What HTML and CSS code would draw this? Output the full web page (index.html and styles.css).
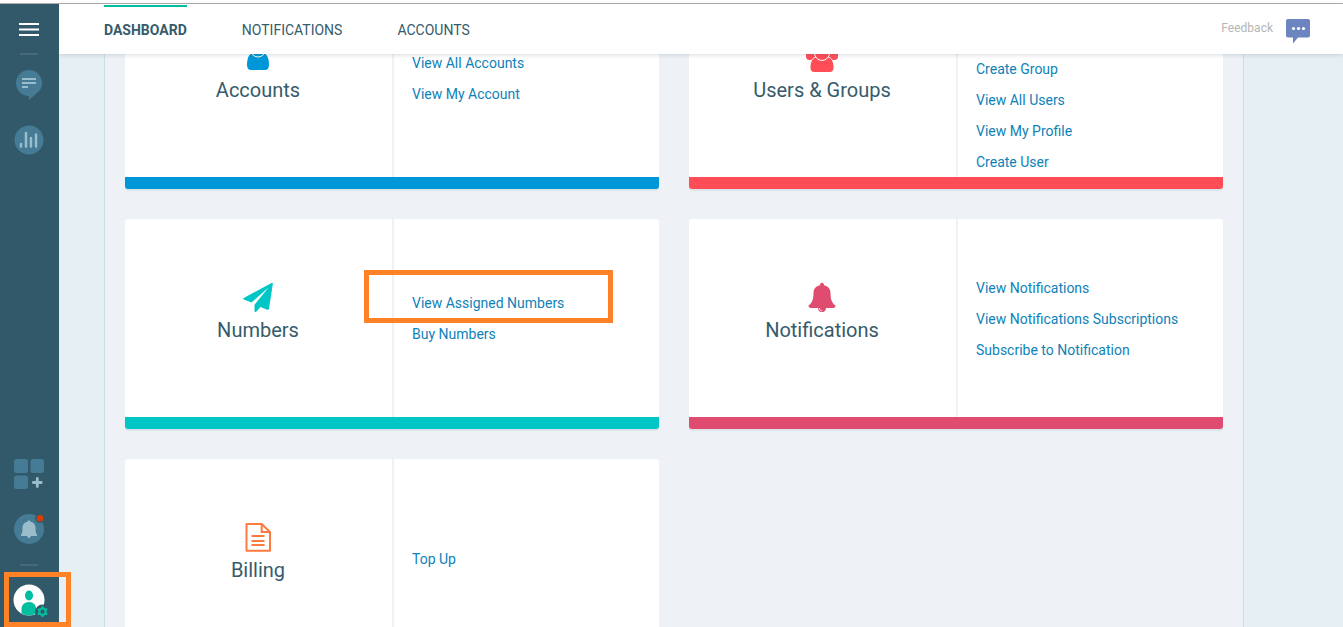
FILE: index.html
```html
<!DOCTYPE html>
<html lang="en">
<head>
<meta charset="utf-8">
<title>Dashboard</title>
<link rel="stylesheet" href="styles.css">
</head>
<body>
<div class="app">
  <aside class="sidebar">
    <button class="menu-button" type="button" aria-label="Menu">
      <svg width="20" height="13" viewBox="0 0 20 13"><path d="M0 1h20M0 6.500h20M0 12h20" stroke="#fff" stroke-width="2"/></svg>
    </button>
    <hr class="rule rule-top">
    <a class="side-item" href="#" aria-label="Messages">
      <svg width="30" height="32" viewBox="0 -2 30 32">
        <path fill="#457b94" d="M15 0a13 13 0 0 1 9.500 21.800L15 30V26A13 13 0 0 1 15 0z"/>
        <path d="M8 9h14M8 13h14M8 17h6" stroke="#9bbccb" stroke-width="2"/>
      </svg>
    </a>
    <a class="side-item" href="#" aria-label="Reports">
      <svg width="30" height="30" viewBox="0 0 30 30">
        <circle cx="15" cy="15" r="14.500" fill="#457b94"/>
        <path d="M7 19v2.500M12 8v13.500M17 13v8.500M22 9.500v12" stroke="#9bbccb" stroke-width="2.500" stroke-linecap="round"/>
      </svg>
    </a>
    <div class="spacer"></div>
    <a class="side-item" href="#" aria-label="Add widgets">
      <svg width="30" height="32" viewBox="0 -2 30 32">
        <g fill="#457b94"><rect width="14" height="14" rx="2.500"/><rect x="16.500" width="13.500" height="14" rx="2.500"/><rect y="16.500" width="14" height="13.500" rx="2.500"/></g>
        <path d="M23.300 19.500v8M19.300 23.500h8" stroke="#9bbccb" stroke-width="2.800" stroke-linecap="round"/>
      </svg>
    </a>
    <a class="side-item" href="#" aria-label="Alerts">
      <svg width="30" height="30" viewBox="0 0 30 30">
        <circle cx="15" cy="15" r="15" fill="#457b94"/>
        <path fill="#9bbccb" d="M14 6.500h2l.5 1.300c3.500.6 5 3.200 5 6.200 0 4 .5 5.500 1.500 6.500v1.500h-6l-1.500 2.300h-1L13 22H7v-1.500c1-1 1.500-2.500 1.500-6.500 0-3 1.500-5.600 5-6.200z"/>
        <circle cx="26" cy="4.300" r="4.800" fill="#32596a"/><circle cx="26" cy="4.300" r="3.200" fill="#dc3c00"/>
      </svg>
    </a>
    <hr class="rule rule-bottom">
    <a class="side-item profile" href="#" aria-label="Profile settings">
      <svg width="36" height="34" viewBox="0 0 36 34">
        <circle cx="16" cy="17" r="15.500" fill="#fff"/>
        <ellipse cx="16" cy="12.500" rx="4" ry="5" fill="#00bfa0"/>
        <path fill="#00bfa0" d="M8.500 30.500V26c0-4 3-7 7.500-7s7 3 7 7v4.500q-3.500 2-7 2t-7.500-2z"/>
        <circle cx="29.500" cy="29" r="7.500" fill="#32596a"/>
        <g transform="translate(29.500 28.700)" fill="none" stroke="#00bfa0" stroke-width="2.200"><circle r="3.200"/><path d="M0-5.400V-3.500M0 3.500V5.400M-4.700-2.700l1.600.9M3.100 1.800l1.600.9M-4.700 2.700l1.600-.9M3.100-1.800l1.600-.9"/></g>
      </svg>
      <span class="highlight highlight-profile"></span>
    </a>
  </aside>

  <div class="content">
    <header class="topbar">
      <nav class="tabs">
        <a class="tab tab-active" href="#">DASHBOARD</a>
        <a class="tab" href="#">NOTIFICATIONS</a>
        <a class="tab" href="#">ACCOUNTS</a>
      </nav>
      <a class="feedback" href="#">
        <span>Feedback</span>
        <svg width="24" height="25" viewBox="0 0 24 25"><path fill="#6c84c0" d="M2 0h20a2 2 0 0 1 2 2v14.500a2 2 0 0 1-2 2H12L7 24.500v-6H2a2 2 0 0 1-2-2V2a2 2 0 0 1 2-2z"/><g fill="#fff"><circle cx="7.500" cy="9.500" r="1.600"/><circle cx="12.500" cy="9.500" r="1.600"/><circle cx="17.500" cy="9.500" r="1.600"/></g></svg>
      </a>
    </header>

    <main class="main">
      <div class="board">
        <section class="card card-blue">
          <div class="card-head">
            <svg width="30" height="30" viewBox="0 0 30 30"><path fill="#0097d8" d="M9 11h12c4 2 5 7 5 12 0 3-1.500 5-4 5H8c-2.500 0-4-2-4-5 0-5 1-10 5-12z"/><circle cx="15" cy="7.500" r="7.500" fill="#0097d8" stroke="#fff" stroke-width="1"/></svg>
            <h2>Accounts</h2>
          </div>
          <ul class="card-links">
            <li><a href="#">View All Accounts</a></li>
            <li><a href="#">View My Account</a></li>
          </ul>
        </section>

        <section class="card card-red">
          <div class="card-head">
            <svg width="34" height="30" viewBox="0 0 34 30"><g fill="#ff4d57"><path d="M1 10h32v4c0 2.500-1 4-3.500 4h-25C2 18 1 16.500 1 14z"/><circle cx="7" cy="5" r="4.500"/><circle cx="27" cy="5" r="4.500"/><path stroke="#fff" d="M11 15h12c4 1 6 5 6 10.500 0 3-1.500 5-4.500 5h-15C6.500 30.500 5 28.500 5 25.500 5 20 7 16 11 15z"/><circle cx="17" cy="11" r="7.500" stroke="#fff"/></g></svg>
            <h2>Users &amp; Groups</h2>
          </div>
          <ul class="card-links card-links-end">
            <li><a href="#">Create Group</a></li>
            <li><a href="#">View All Users</a></li>
            <li><a href="#">View My Profile</a></li>
            <li><a href="#">Create User</a></li>
          </ul>
        </section>

        <section class="card card-teal">
          <div class="card-head">
            <svg width="30" height="30" viewBox="0 0 30 30"><path fill="#00c6c6" d="M29 .8q1 0 .8 1.400L26 26.500q-.3 1.700-1.800 1.200L17.500 25l-4 4.600q-2 1.200-2-.8v-6L25.500 5.500 8.500 20.500.8 17.600q-1.400-.8 0-1.700z"/></svg>
            <h2>Numbers</h2>
          </div>
          <ul class="card-links">
            <li><a href="#">View Assigned Numbers</a><span class="highlight highlight-link"></span></li>
            <li><a href="#">Buy Numbers</a></li>
          </ul>
        </section>

        <section class="card card-pink">
          <div class="card-head">
            <svg width="30" height="30" viewBox="0 0 30 30"><path fill="#e04b70" d="M13 3.200C13 1.700 13.700.8 15 .8s2 .9 2 2.400c4.300.8 6.500 4 6.500 7.500 0 6 1 9.800 5 12.800 0 1.500-.8 2.500-2.300 2.500H19c0 2.400-1.700 4.200-4 4.200S11 28.400 11 26H3.800c-1.500 0-2.300-1-2.300-2.500 4-3 5-6.800 5-12.800C6.500 7.200 8.700 4 13 3.200z"/><path d="M12.200 26c.2 1.700 1.300 2.800 3 2.900" fill="none" stroke="#fff" stroke-width=".8"/></svg>
            <h2>Notifications</h2>
          </div>
          <ul class="card-links">
            <li><a href="#">View Notifications</a></li>
            <li><a href="#">View Notifications Subscriptions</a></li>
            <li><a href="#">Subscribe to Notification</a></li>
          </ul>
        </section>

        <section class="card card-orange">
          <div class="card-head">
            <svg width="30" height="30" viewBox="0 0 30 30"><g fill="none" stroke="#ff7a40" stroke-width="2"><path d="M3.500 2h15.200l8.300 8v18.800H3.500z" stroke-linejoin="round"/><path d="M18.700 2v8H27M8.500 14h13M8.500 19h13M8.500 23h13"/></g></svg>
            <h2>Billing</h2>
          </div>
          <ul class="card-links">
            <li><a href="#">Top Up</a></li>
          </ul>
        </section>
      </div>
    </main>
  </div>
</div>
</body>
</html>
```
FILE: styles.css
```css
* { box-sizing: border-box; }

body {
  margin: 0;
  padding-top: 3px;
  height: 100vh;
  overflow: hidden;
  background: #fff;
  color: #365b6b;
  font-family: Roboto, "Liberation Sans", sans-serif;
  font-size: 14px;
}

a { color: inherit; text-decoration: none; }
svg { display: block; }

.app {
  display: flex;
  height: 100%;
  border-top: 1px solid #adadad;
}

/* Sidebar */
.sidebar {
  position: relative;
  z-index: 3;
  display: flex;
  flex-direction: column;
  flex: none;
  width: 59px;
  padding-right: 1px;
  background: #32596a;
}

.menu-button {
  display: flex;
  align-items: center;
  justify-content: center;
  width: 100%;
  height: 49px;
  padding: 2px 0 0;
  border: 0;
  background: none;
  cursor: pointer;
}

.rule {
  flex: none;
  width: 18px;
  height: 2px;
  border: 0;
  background: #48697a;
}
.rule-top { margin: 0 auto 1px; }
.rule-bottom { margin: 7px auto; }

.side-item {
  display: flex;
  align-items: center;
  justify-content: center;
  flex: none;
  height: 56px;
}
.spacer { flex: 1; }

.profile {
  position: relative;
  height: 54px;
  padding-left: 4px;
}

.highlight {
  position: absolute;
  border: 5px solid #ff8326;
  pointer-events: none;
}
.highlight-profile {
  left: 4px;
  top: -1px;
  width: 67px;
  height: 55px;
}
.highlight-link {
  left: -48px;
  top: -17px;
  width: 249px;
  height: 53px;
}

/* Content */
.content {
  display: flex;
  flex-direction: column;
  flex: 1;
  min-width: 0;
}

.topbar {
  position: relative;
  z-index: 2;
  display: flex;
  justify-content: space-between;
  flex: none;
  height: 50px;
  padding: 0 33px 0 45px;
  background: #fff;
  box-shadow: 0 1px 4px rgba(50, 80, 100, 0.2);
}

.tabs { display: flex; gap: 55px; }
.tab {
  margin-top: 1px;
  border-top: 2px solid transparent;
  line-height: 46px;
}
.tab-active {
  border-color: #00bfa0;
  font-weight: 700;
}

.feedback {
  display: flex;
  align-items: center;
  gap: 13px;
  color: #b5b5b5;
  font-size: 12px;
}
.feedback span { padding-bottom: 2px; }
.feedback svg { margin-top: 4px; }

.main {
  flex: 1;
  min-height: 0;
  padding: 0 99px 0 45px;
  overflow: hidden;
  background: #e6eff3;
}

.board {
  display: grid;
  grid-template-columns: 1fr 1fr;
  grid-auto-rows: 210px;
  gap: 30px;
  margin-top: -75px;
  padding: 0 20px 30px;
  border: solid #cddde5;
  border-width: 0 1px;
  background: #eef2f6;
}

.card {
  display: grid;
  grid-template-columns: 1fr 1fr;
  border-bottom: 12px solid;
  border-radius: 3px;
  background: #fff;
  box-shadow: 0 2px 1px #dce3ea;
}
.card-blue { border-color: #0097d8; }
.card-red { border-color: #ff4d57; }
.card-teal { border-color: #00c6c6; }
.card-pink { border-color: #e04b70; }
.card-orange { border-color: #ff7a40; }

.card-head {
  display: flex;
  flex-direction: column;
  align-items: center;
  justify-content: center;
  gap: 6px;
  padding: 0 1px 12px 0;
}
.card-head h2 {
  margin: 0;
  font-size: 20px;
  font-weight: 400;
  line-height: 24px;
}

.card-links {
  display: flex;
  flex-direction: column;
  justify-content: center;
  margin: 0;
  padding: 0 0 0 18px;
  border-left: 2px solid #eef2f6;
  list-style: none;
}
.card-links-end { justify-content: flex-end; }
.card-links li {
  position: relative;
  padding-top: 1px;
  color: #0d82b8;
  line-height: 30px;
}
```
